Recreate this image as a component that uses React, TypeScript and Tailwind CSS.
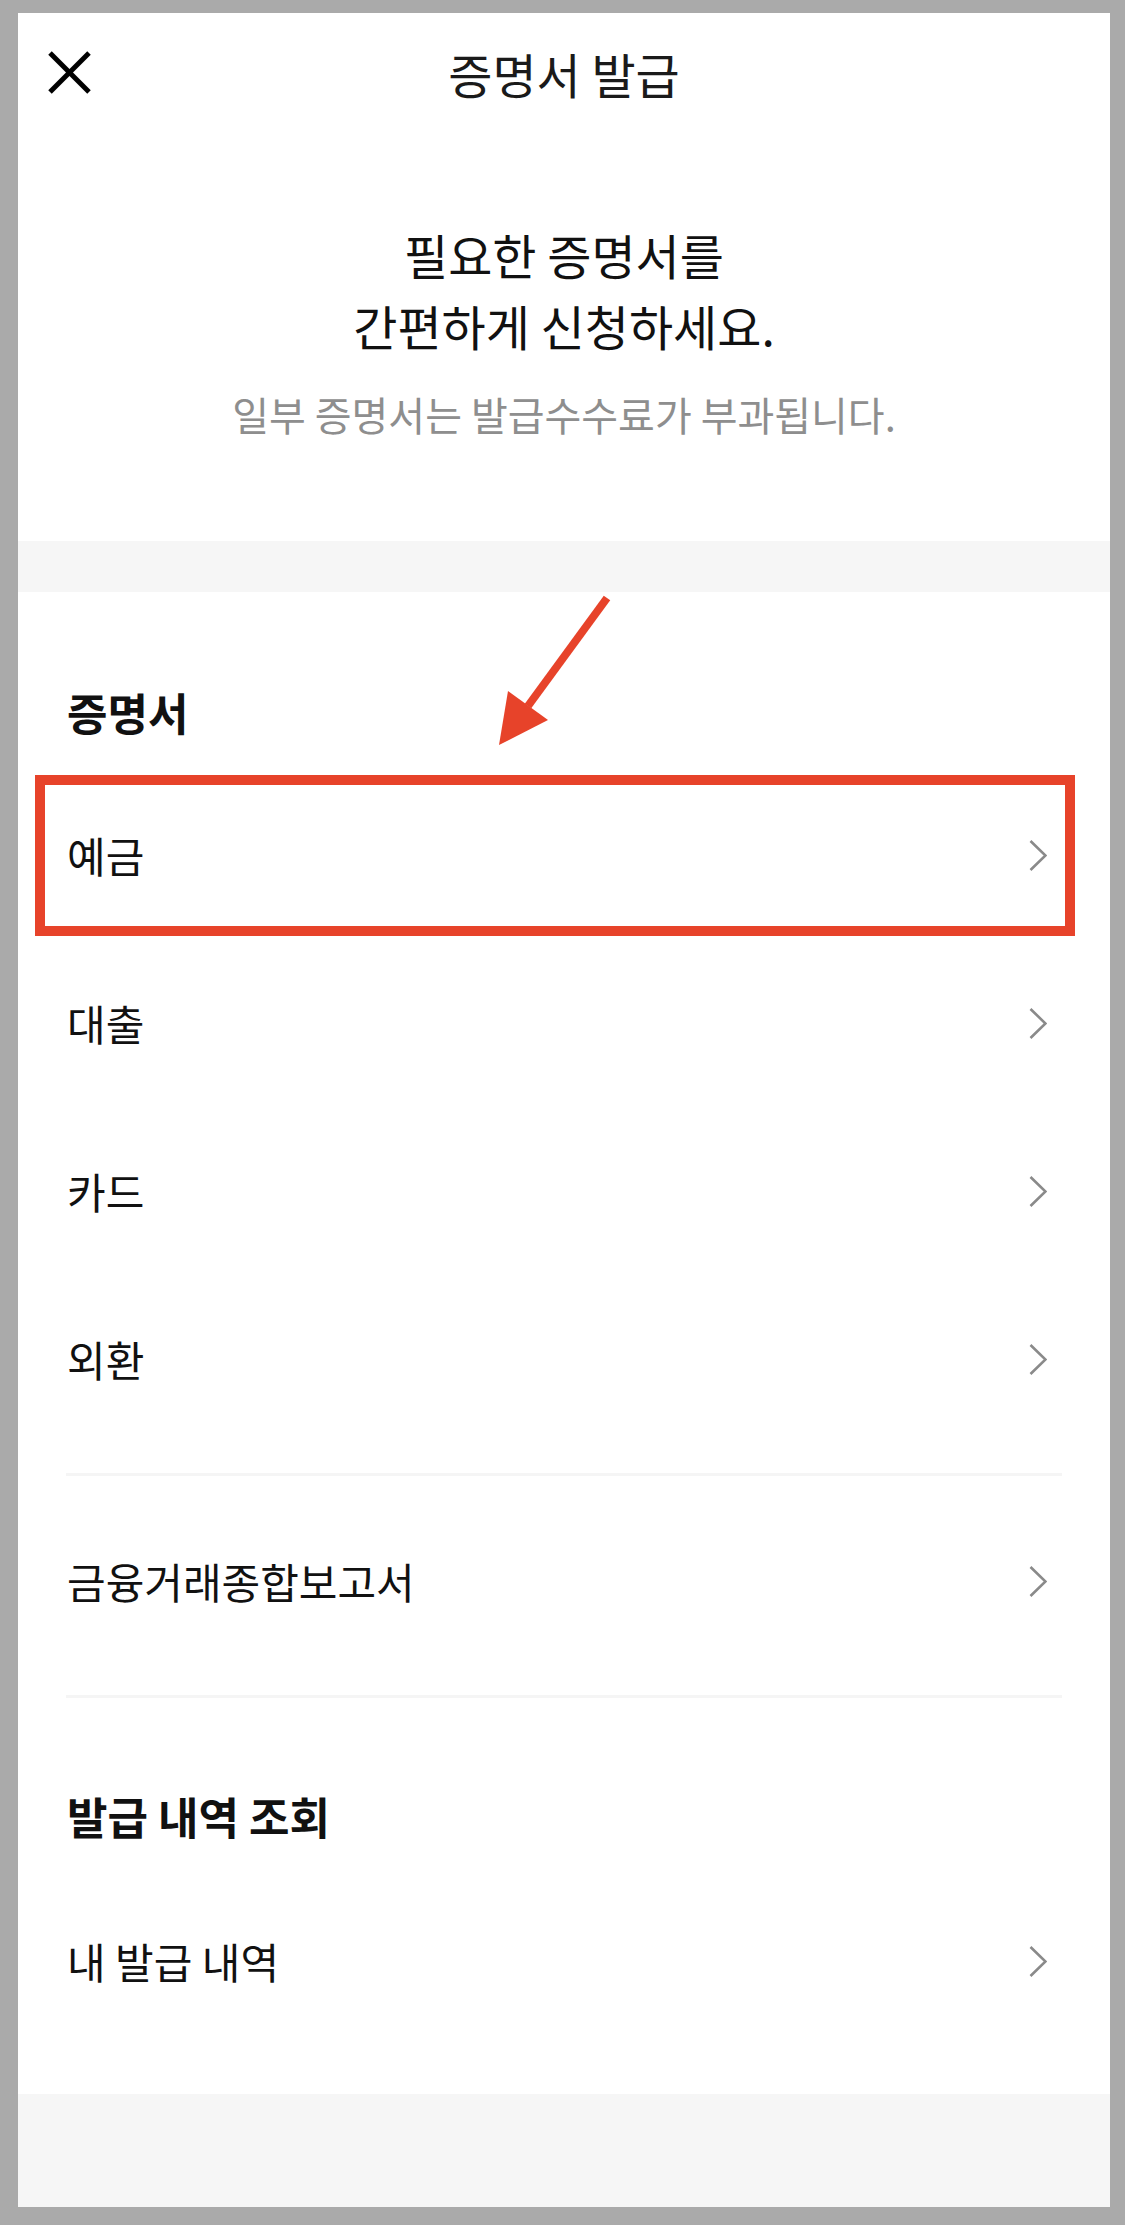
import React from "react";

function Chevron() {
  return (
    <svg width="18" height="31" viewBox="0 0 18 31" fill="none" className="shrink-0">
      <polyline points="1.5,1 16.5,15.5 1.5,30" stroke="#8a8a8a" strokeWidth="2.6" fill="none" />
    </svg>
  );
}

function Row({ label, highlight }: { label: string; highlight?: boolean }) {
  return (
    <div className="relative flex h-[168px] items-center justify-between pl-[1px] pr-[15px]">
      <span className="text-[42px] leading-[52px] text-[#111111]">{label}</span>
      <Chevron />
      {highlight && (
        <div className="pointer-events-none absolute -left-[31px] -right-[13px] top-[4px] bottom-[3px] border-[10px] border-[#e7432a]" />
      )}
    </div>
  );
}

export default function App() {
  return (
    <div className="relative min-h-[2225px] w-[1125px] bg-[#aaaaaa] pl-[18px] pr-[15px] pt-[13px] pb-[18px] font-[family-name:'Noto_Sans_CJK_KR',sans-serif]">
      <div className="flex flex-col bg-white">
        {/* Header */}
        <div className="grid h-[120px] grid-cols-[1fr_auto_1fr] items-center px-[30px]">
          <svg width="43" height="43" viewBox="0 0 43 43" className="mt-[-1px]">
            <line x1="2" y1="2" x2="41" y2="41" stroke="#000" strokeWidth="5" />
            <line x1="41" y1="2" x2="2" y2="41" stroke="#000" strokeWidth="5" />
          </svg>
          <h1 className="text-[48px] leading-[60px] font-normal text-[#1a1a1a]">증명서 발급</h1>
          <div />
        </div>

        {/* Hero */}
        <div className="flex h-[408px] flex-col items-center pt-[86px] text-center">
          <p className="text-[48px] leading-[71px] text-[#111111]">
            필요한 증명서를
            <br />
            간편하게 신청하세요.
          </p>
          <p className="mt-[27px] text-[40px] leading-[52px] text-[#8e8e8e]">일부 증명서는 발급수수료가 부과됩니다.</p>
        </div>

        <div className="h-[51px] bg-[#f6f6f6]" />

        {/* Certificates */}
        <div className="flex flex-col px-[48px] pt-[92px]">
          <h2 className="mb-[31px] h-[56px] pl-[1px] text-[44px] leading-[56px] font-bold text-[#111111]">증명서</h2>
          <Row label="예금" highlight />
          <Row label="대출" />
          <Row label="카드" />
          <Row label="외환" />
          <div className="mt-[30px] mb-[21px] h-[3px] bg-[#f5f5f5]" />
          <Row label="금융거래종합보고서" />
          <div className="mt-[30px] h-[3px] bg-[#f5f5f5]" />
          <h2 className="mt-[90px] mb-[33px] h-[56px] pl-[1px] text-[44px] leading-[56px] font-bold text-[#111111]">발급 내역 조회</h2>
          <Row label="내 발급 내역" />
          <div className="h-[49px]" />
        </div>

        <div className="h-[113px] bg-[#f6f6f6]" />
      </div>

      {/* Annotation arrow */}
      <svg
        className="pointer-events-none absolute left-[490px] top-[590px]"
        width="130"
        height="165"
        viewBox="490 590 130 165"
      >
        <line x1="607" y1="598" x2="528" y2="706" stroke="#e7432a" strokeWidth="8" strokeLinecap="butt" />
        <polygon points="508,691 548,720 499,745" fill="#e7432a" />
      </svg>
    </div>
  );
}
